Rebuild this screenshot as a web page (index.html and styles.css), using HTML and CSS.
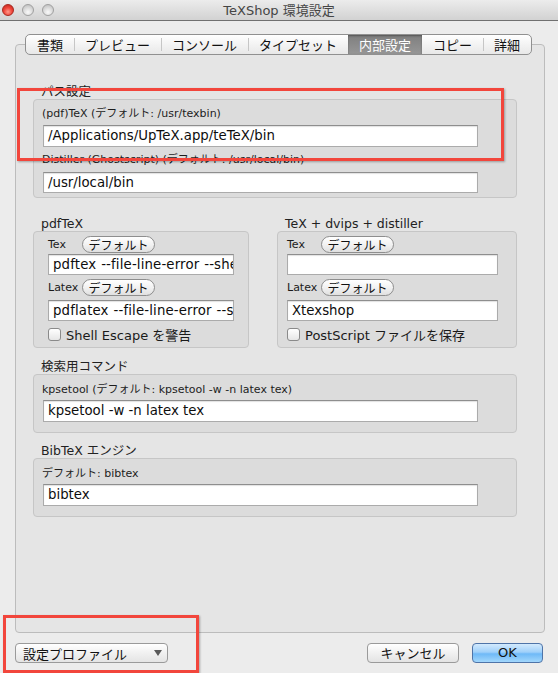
FILE: index.html
```html
<!DOCTYPE html>
<html lang="ja">
<head>
<meta charset="utf-8">
<title>TeXShop 環境設定</title>
<link rel="stylesheet" href="styles.css">
</head>
<body>
<div class="titlebar">
  <div class="lights"><span class="light red"></span><span class="light"></span><span class="light"></span></div>
  <div class="title">TeXShop 環境設定</div>
  <div></div>
</div>
<div class="content">
  <div class="tabs">
    <div class="tab">書類</div>
    <div class="tab">プレビュー</div>
    <div class="tab">コンソール</div>
    <div class="tab">タイプセット</div>
    <div class="tab active">内部設定</div>
    <div class="tab">コピー</div>
    <div class="tab">詳細</div>
  </div>
  <div class="panel">
    <div class="sec-label">パス設定</div>
    <div class="box box-path">
      <div class="small">(pdf)TeX (デフォルト: /usr/texbin)</div>
      <div class="field wide mt4">/Applications/UpTeX.app/teTeX/bin</div>
      <div class="small mt6">Distiller (Ghostscript) (デフォルト: /usr/local/bin)</div>
      <div class="field wide mt5 h21">/usr/local/bin</div>
    </div>

    <div class="row">
      <div class="col">
        <div class="sec-label">pdfTeX</div>
        <div class="box box-cmd left">
          <div class="cmd-row"><span class="cmd-label">Tex</span><span class="pill">デフォルト</span></div>
          <div class="field h21 mt1 w186 dash">pdftex --file-line-error --shell-escape</div>
          <div class="cmd-row mt4"><span class="cmd-label">Latex</span><span class="pill">デフォルト</span></div>
          <div class="field h21 mt4 w186 dash">pdflatex --file-line-error --shell-escape</div>
          <div class="check mt6"><span class="cb"></span><span>Shell Escape を警告</span></div>
        </div>
      </div>
      <div class="col">
        <div class="sec-label">TeX + dvips + distiller</div>
        <div class="box box-cmd right">
          <div class="cmd-row"><span class="cmd-label">Tex</span><span class="pill">デフォルト</span></div>
          <div class="field h21 mt1 w211"></div>
          <div class="cmd-row mt4"><span class="cmd-label">Latex</span><span class="pill">デフォルト</span></div>
          <div class="field h21 mt4 w211">Xtexshop</div>
          <div class="check mt6"><span class="cb"></span><span>PostScript ファイルを保存</span></div>
        </div>
      </div>
    </div>

    <div class="sec-label mt11">検索用コマンド</div>
    <div class="box box-single">
      <div class="small">kpsetool (デフォルト: kpsetool -w -n latex tex)</div>
      <div class="field wide mt3">kpsetool -w -n latex tex</div>
    </div>

    <div class="sec-label mt10">BibTeX エンジン</div>
    <div class="box box-single">
      <div class="small">デフォルト: bibtex</div>
      <div class="field wide mt3">bibtex</div>
    </div>
  </div>
</div>
<div class="bottombar">
  <div class="popup"><span>設定プロファイル</span><span class="arrow"></span></div>
  <div class="spacer"></div>
  <div class="button cancel">キャンセル</div>
  <div class="button ok">OK</div>
</div>
<div class="mark mark1"></div>
<div class="mark mark2"></div>
</body>
</html>
```

FILE: styles.css
```css
* { box-sizing: border-box; }
html, body { margin: 0; padding: 0; }
body {
  width: 558px;
  height: 673px;
  background: #ececec;
  font-family: "DejaVu Sans", "Noto Sans CJK JP", sans-serif;
  color: #1a1a1a;
  position: relative;
  overflow: hidden;
}

/* title bar */
.titlebar {
  height: 21px;
  border-bottom: 1px solid #707070;
  background: linear-gradient(#ececec, #d2d2d2);
  display: grid;
  grid-template-columns: 1fr auto 1fr;
  align-items: center;
}
.lights { display: flex; gap: 8px; padding-left: 2px; padding-bottom: 1px; align-items: center; }
.light {
  width: 12px; height: 12px; border-radius: 50%;
  border: 1px solid #a0a0a0;
  background: radial-gradient(circle at 50% 72%, #fafafa 0, #dedede 45%, #b8b8b8 100%);
}
.light.red {
  border-color: #a8281f;
  background: radial-gradient(circle at 50% 68%, #ff9a8c 0, #f0453a 48%, #b8221a 100%);
}
.title {
  font-size: 13px;
  color: #454545;
  padding-bottom: 1px;
}

/* content */
.content { padding: 13px 13px 0 15px; }
.tabs {
  display: flex;
  width: max-content;
  margin-left: 10px;
  height: 21px;
  position: relative;
  z-index: 1;
  border: 1px solid #909090;
  border-radius: 5px;
  background: linear-gradient(#ffffff, #f3f3f3 50%, #e8e8e8);
  overflow: hidden;
}
.tab {
  font-family: "Noto Sans CJK JP", sans-serif;
  font-size: 13px;
  line-height: 19px;
  padding: 0 11px;
  position: relative;
  color: #111;
}
.tab + .tab::before {
  content: "";
  position: absolute;
  left: 0; top: 3px; bottom: 3px;
  width: 1px;
  background: #c6c6c6;
}
.tab.active {
  background: linear-gradient(#7f7f7f, #969696);
  color: #fff;
  box-shadow: inset 0 1px 2px rgba(0,0,0,.35);
}
.tab.active::before, .tab.active + .tab::before { display: none; }

.panel {
  margin-top: -11px;
  width: 530px;
  height: 589px;
  border: 1px solid #bcbcbc;
  border-radius: 4px;
  background: #e5e5e5;
  padding: 39px 0 0 17px;
}
.sec-label {
  font-size: 12.5px;
  line-height: 15px;
  height: 15px;
  margin-left: 8px;
  color: #222;
  white-space: nowrap;
}
.box {
  background: #dcdcdc;
  border: 1px solid #c6c6c6;
  border-radius: 4px;
}
.box-path { width: 484px; height: 99px; padding: 7px 0 0 8px; }
.box-single { width: 484px; height: 59px; padding: 8px 0 0 8px; }
.box-cmd { height: 117px; padding-top: 4px; }
.box-cmd.left { width: 216px; padding-left: 14px; }
.box-cmd.right { width: 240px; padding-left: 9px; }

.small { font-size: 11px; line-height: 14px; height: 14px; white-space: nowrap; color: #1c1c1c; }
.field {
  background: #fff;
  border: 1px solid #ababab;
  border-top-color: #8e8e8e;
  box-shadow: inset 0 1px 1px rgba(0,0,0,.12);
  height: 22px;
  font-size: 13.3px;
  line-height: 20px;
  padding-left: 4px;
  white-space: nowrap;
  overflow: hidden;
  color: #0d0d0d;
}
.field.dash { word-spacing: 0.5px; letter-spacing: 0.15px; }
.field.wide { width: 435px; margin-left: 1px; }
.field.w186 { width: 186px; }
.field.w211 { width: 211px; }
.h21 { height: 21px; line-height: 19px; }
.mt1 { margin-top: 1px; }
.mt3 { margin-top: 3px; }
.mt4 { margin-top: 4px; }
.mt5 { margin-top: 5px; }
.mt6 { margin-top: 6px; }
.mt10 { margin-top: 10px; }
.mt11 { margin-top: 11px; }

.row { display: flex; gap: 28px; margin-top: 18px; }
.cmd-row { display: flex; align-items: center; height: 17px; }
.cmd-label { width: 34px; font-size: 11px; }
.pill {
  width: 73px;
  height: 17px;
  border: 1px solid #8e8e8e;
  border-radius: 9px;
  background: linear-gradient(#ffffff, #f2f2f2 50%, #e0e0e0);
  font-family: "Noto Sans CJK JP", sans-serif;
  font-size: 12px;
  line-height: 15px;
  text-align: center;
  color: #111;
}
.check { display: flex; align-items: center; gap: 5px; height: 15px; font-size: 13px; white-space: nowrap; }
.cb {
  width: 13px; height: 13px;
  border: 1px solid #8a8a8a;
  border-radius: 3px;
  background: linear-gradient(#ffffff, #e6e6e6);
  flex: none;
}

/* bottom */
.bottombar { display: flex; align-items: center; padding: 10px 15px 0 15px; }
.spacer { flex: 1; }
.popup {
  width: 153px; height: 20px;
  border: 1px solid #9a9a9a;
  border-radius: 4px;
  background: linear-gradient(#ffffff, #f1f1f1 50%, #e4e4e4);
  display: flex; align-items: center; justify-content: space-between;
  padding: 0 5px 0 7px;
  font-family: "Noto Sans CJK JP", sans-serif;
  font-size: 13px;
  color: #111;
}
.arrow {
  width: 0; height: 0;
  border-left: 4px solid transparent;
  border-right: 4px solid transparent;
  border-top: 6px solid #5a5a5a;
}
.button {
  height: 20px;
  border-radius: 4px;
  text-align: center;
  font-size: 13px;
  line-height: 18px;
  color: #111;
}
.cancel {
  width: 92px;
  border: 1px solid #9a9a9a;
  background: linear-gradient(#ffffff, #f1f1f1 50%, #e3e3e3);
  font-family: "Noto Sans CJK JP", sans-serif;
  margin-right: 13px;
}
.ok {
  width: 71px;
  border: 1px solid #4f74a8;
  background: linear-gradient(#d3eafd, #9fd0fa 45%, #6fb9f7 55%, #a2d7fc);
}

/* annotation marks */
.mark {
  position: absolute;
  border: 3px solid #f2463c;
  box-shadow: 1px 1px 2px rgba(0,0,0,.3);
}
.mark1 { left: 17px; top: 88px; width: 487px; height: 73px; }
.mark2 { left: 3px; top: 615px; width: 196px; height: 58px; }
```
